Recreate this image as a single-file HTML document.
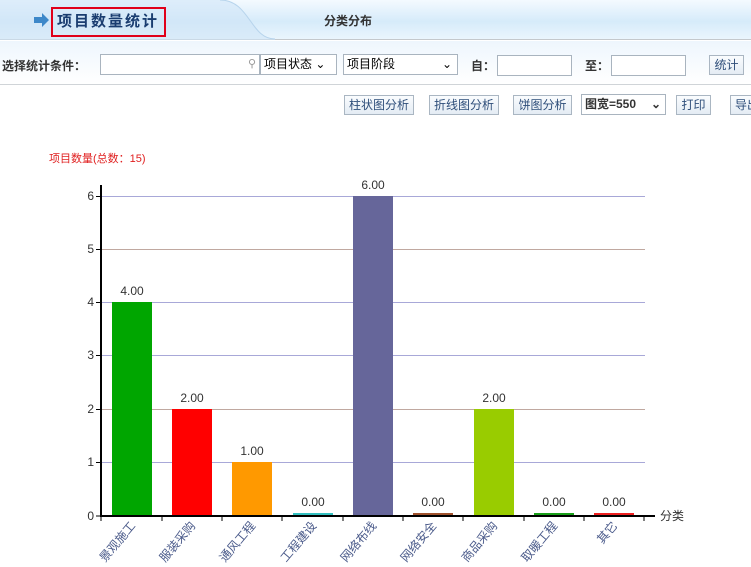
<!DOCTYPE html>
<html><head><meta charset="utf-8"><style>
*{margin:0;padding:0;box-sizing:border-box}
body{width:751px;height:567px;overflow:hidden;background:#fff;font-family:"Liberation Sans","Noto Sans CJK SC",sans-serif;position:relative}
.hdr{position:absolute;left:0;top:0;width:751px;height:40px;background:linear-gradient(#f4faff,#d6ebfa 55%,#eaf5fd);border-bottom:1px solid #c4c8cc}
.t1{position:absolute;left:51px;top:7px;width:115px;height:30px;border:2px solid #e0001a;color:#1a3d70;font-size:15px;font-weight:bold;letter-spacing:2px;line-height:26px;padding-left:4px;white-space:nowrap}
.t2{position:absolute;left:324px;top:12px;font-size:12px;font-weight:bold;color:#333}
.bar2{position:absolute;left:0;top:41px;width:751px;height:44px;background:linear-gradient(#eef6fd,#fff);border-bottom:1px solid #d0d4d8}
.l{position:absolute;font-size:12px;font-weight:bold;color:#333}
.in{position:absolute;height:21px;border:1px solid #a9b4bf;background:#fff}
.sel{position:absolute;height:21px;border:1px solid #a9b4bf;background:#fff;font-size:12px;color:#000;line-height:19px;padding-left:3px}
.btn{position:absolute;height:20px;border:1px solid #aab6c2;background:linear-gradient(#fafcfe,#e4ecf4);font-size:12px;color:#2e4e7a;line-height:18px;text-align:center}
</style></head><body>
<div class="hdr">
<svg style="position:absolute;left:0;top:0" width="400" height="40"><path d="M0 0H220C250 0 250 39 275 39V40H0Z" fill="#cfe5f7" opacity="0.6"/><path d="M220 0C250 0 250 39 275 39" stroke="#b7d4ec" fill="none"/></svg>
<svg style="position:absolute;left:34px;top:13px" width="16" height="14"><path d="M0 4H8V0L15 7L8 14V10H0Z" fill="#3d88c9"/></svg>
<div class="t1">项目数量统计</div>
<div class="t2">分类分布</div>
</div>
<div class="bar2"></div>
<div class="l" style="left:2px;top:57px">选择统计条件：</div>
<div class="in" style="left:100px;top:54px;width:160px"><span style="position:absolute;right:3px;top:2px;font-size:11px;color:#999">&#9906;</span></div>
<div class="sel" style="left:260px;top:54px;width:77px">项目状态 ⌄</div>
<div class="sel" style="left:343px;top:54px;width:115px">项目阶段<span style="position:absolute;right:5px;top:0">⌄</span></div>
<div class="l" style="left:471px;top:57px">自：</div>
<div class="in" style="left:497px;top:55px;width:75px"></div>
<div class="l" style="left:585px;top:57px">至：</div>
<div class="in" style="left:611px;top:55px;width:75px"></div>
<div class="btn" style="left:709px;top:55px;width:35px">统计</div>
<div class="btn" style="left:344px;top:95px;width:70px">柱状图分析</div>
<div class="btn" style="left:429px;top:95px;width:70px">折线图分析</div>
<div class="btn" style="left:513px;top:95px;width:59px">饼图分析</div>
<div class="sel" style="left:581px;top:94px;width:85px;font-weight:bold;color:#333">图宽=550<span style="position:absolute;right:4px;top:0">⌄</span></div>
<div class="btn" style="left:676px;top:95px;width:35px">打印</div>
<div class="btn" style="left:730px;top:95px;width:35px;text-align:left;padding-left:4px">导出</div>
<svg style="position:absolute;left:0;top:0" width="751" height="567" font-family="Liberation Sans,Noto Sans CJK SC,sans-serif" font-size="12">
<text x="49" y="162" fill="#e02020" font-size="11">项目数量(总数：15)</text>
<g stroke="#a8a8d8" stroke-width="1">
<line x1="101" y1="196.5" x2="645" y2="196.5"/><line x1="101" y1="249.5" x2="645" y2="249.5" stroke="#c0a8a0"/><line x1="101" y1="302.5" x2="645" y2="302.5"/><line x1="101" y1="355.5" x2="645" y2="355.5"/><line x1="101" y1="409.5" x2="645" y2="409.5" stroke="#c0a8a0"/><line x1="101" y1="462.5" x2="645" y2="462.5"/>
</g>
<g fill="#333" text-anchor="end"><text x="94" y="200">6</text><text x="94" y="253">5</text><text x="94" y="306">4</text><text x="94" y="359">3</text><text x="94" y="413">2</text><text x="94" y="466">1</text><text x="94" y="520">0</text></g>
<g stroke="#000"><line x1="96" y1="196.5" x2="101" y2="196.5"/><line x1="96" y1="249.5" x2="101" y2="249.5"/><line x1="96" y1="302.5" x2="101" y2="302.5"/><line x1="96" y1="355.5" x2="101" y2="355.5"/><line x1="96" y1="409.5" x2="101" y2="409.5"/><line x1="96" y1="462.5" x2="101" y2="462.5"/><line x1="96" y1="516" x2="101" y2="516"/></g>
<rect x="112" y="302" width="40" height="214" fill="#00a600"/>
<rect x="172" y="409" width="40" height="107" fill="#ff0000"/>
<rect x="232" y="462" width="40" height="54" fill="#ff9900"/>
<rect x="293" y="513" width="40" height="3" fill="#33c0c0"/>
<rect x="353" y="196" width="40" height="320" fill="#66669a"/>
<rect x="413" y="513" width="40" height="3" fill="#a0522d"/>
<rect x="474" y="409" width="40" height="107" fill="#99cc00"/>
<rect x="534" y="513" width="40" height="3" fill="#1aa01a"/>
<rect x="594" y="513" width="40" height="3" fill="#ee2020"/>
<g fill="#333" text-anchor="middle"><text x="132" y="295">4.00</text><text x="192" y="402">2.00</text><text x="252" y="455">1.00</text><text x="313" y="506">0.00</text><text x="373" y="189">6.00</text><text x="433" y="506">0.00</text><text x="494" y="402">2.00</text><text x="554" y="506">0.00</text><text x="614" y="506">0.00</text></g>
<line x1="101" y1="185" x2="101" y2="517" stroke="#000" stroke-width="2"/>
<line x1="100" y1="516" x2="655" y2="516" stroke="#000" stroke-width="2"/>
<g stroke="#000"><line x1="101" y1="516" x2="101" y2="521"/><line x1="162" y1="516" x2="162" y2="521"/><line x1="222" y1="516" x2="222" y2="521"/><line x1="282" y1="516" x2="282" y2="521"/><line x1="343" y1="516" x2="343" y2="521"/><line x1="403" y1="516" x2="403" y2="521"/><line x1="463" y1="516" x2="463" y2="521"/><line x1="524" y1="516" x2="524" y2="521"/><line x1="584" y1="516" x2="584" y2="521"/><line x1="644" y1="516" x2="644" y2="521"/></g>
<text x="660" y="520" fill="#333">分类</text>
<g fill="#4a5a8a" text-anchor="end">
<text transform="translate(136,526) rotate(-50)">景观施工</text>
<text transform="translate(196,526) rotate(-50)">服装采购</text>
<text transform="translate(256,526) rotate(-50)">通风工程</text>
<text transform="translate(317,526) rotate(-50)">工程建设</text>
<text transform="translate(377,526) rotate(-50)">网络布线</text>
<text transform="translate(437,526) rotate(-50)">网络安全</text>
<text transform="translate(498,526) rotate(-50)">商品采购</text>
<text transform="translate(558,526) rotate(-50)">取暖工程</text>
<text transform="translate(618,526) rotate(-50)">其它</text>
</g>
</svg>
</body></html>
